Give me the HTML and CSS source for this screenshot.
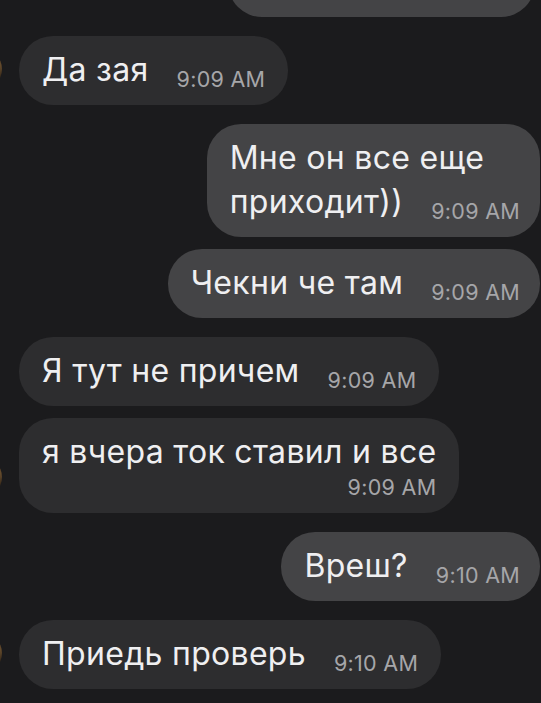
FILE: index.html
```html
<!DOCTYPE html>
<html lang="ru">
<head>
	<meta charset="UTF-8">
	<title>Чат</title>
	<link rel="stylesheet" href="styles.css">
</head>
<body>
	<div class="chat">
		<div class="row out">
			<div class="bubble bubble-cut">
				<span class="text">&nbsp;<br>&nbsp;</span><span class="time">9:09 AM</span>
			</div>
		</div>

		<div class="row in">
			<span class="avatar"></span>
			<div class="bubble">
				<span class="text">Да зая</span><span class="time">9:09 AM</span>
			</div>
		</div>

		<div class="row out">
			<div class="bubble">
				<span class="text">Мне он все еще<br>приходит))</span><span class="time">9:09 AM</span>
			</div>
		</div>

		<div class="row out same">
			<div class="bubble">
				<span class="text">Чекни че там</span><span class="time">9:09 AM</span>
			</div>
		</div>

		<div class="row in">
			<span class="avatar empty"></span>
			<div class="bubble">
				<span class="text">Я тут не причем</span><span class="time">9:09 AM</span>
			</div>
		</div>

		<div class="row in same">
			<span class="avatar"></span>
			<div class="bubble bubble-wrap">
				<span class="text">я вчера ток ставил и все</span><span class="time">9:09 AM</span>
			</div>
		</div>

		<div class="row out">
			<div class="bubble">
				<span class="text">Вреш?</span><span class="time">9:10 AM</span>
			</div>
		</div>

		<div class="row in">
			<span class="avatar"></span>
			<div class="bubble">
				<span class="text">Приедь проверь</span><span class="time">9:10 AM</span>
			</div>
		</div>
	</div>
</body>
</html>
```

FILE: styles.css
```css
* {
    margin: 0;
    padding: 0;
    box-sizing: border-box;
}

body {
    width: 541px;
    height: 703px;
    overflow: hidden;
    background: #1b1b1d;
    font-family: Inter, "Liberation Sans", sans-serif;
    color: #efeff1;
}

.chat {
    display: flex;
    flex-direction: column;
    margin-top: -96px;
    padding-right: 1px;
}

.row {
    display: flex;
    align-items: flex-end;
    margin-top: 19px;
}

.row.same {
    margin-top: 12px;
}

.row:first-child {
    margin-top: 0;
}

.row.out {
    justify-content: flex-end;
}

.avatar {
    flex: none;
    width: 40px;
    height: 40px;
    margin: 0 17px 16px -38px;
    border-radius: 50%;
    background: radial-gradient(circle at 90% 40%, #6e5230 0, #3e2e1c 25%, #1e1c20 60%);
}

.avatar.empty {
    visibility: hidden;
}

.bubble {
    padding: 12px 23px 13px 23px;
    border-radius: 34px;
    background: #2d2d2f;
    white-space: nowrap;
}

.out .bubble {
    background: #444446;
    padding-right: 20px;
}

.bubble-cut {
    width: 307px;
    margin-right: 5px;
    text-align: right;
}

.text {
    font-size: 32px;
    line-height: 44px;
    letter-spacing: 0.3px;
}

.time {
    display: inline-block;
    margin-left: 28px;
    font-size: 21.5px;
    line-height: 1;
    letter-spacing: 0.3px;
    vertical-align: -6px;
    color: #a6a6a9;
}

.bubble-wrap .time {
    display: block;
    margin: 0;
    line-height: 26px;
    text-align: right;
    vertical-align: baseline;
}
```
